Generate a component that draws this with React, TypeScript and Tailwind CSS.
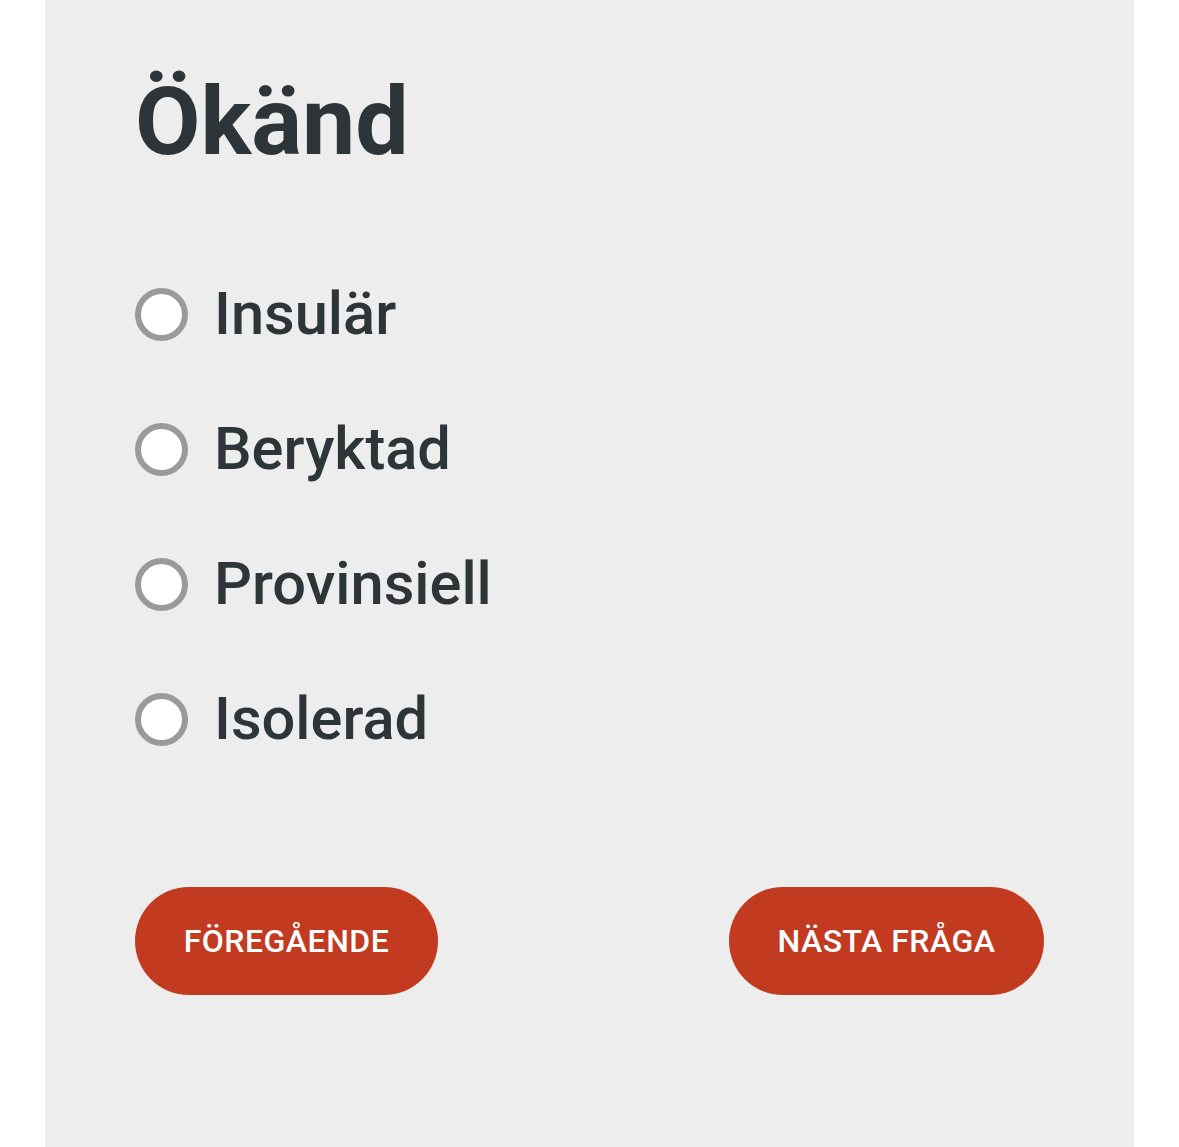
const options = ["Insulär", "Beryktad", "Provinsiell", "Isolerad"];

function App() {
  return (
    <main className="min-h-[1147px] w-[1179px] bg-white font-['Roboto',sans-serif]">
      <section className="ml-[45px] min-h-[1147px] w-[1089px] bg-[#ededed] pl-[90px] pr-[90px] pt-[62px]">
        <h1 className="text-[95px] font-bold leading-[120px] text-[#2d3538]">Ökänd</h1>

        <div className="mt-[101px] flex flex-col gap-[73px]">
          {options.map((opt) => (
            <label key={opt} className="flex h-[62px] items-center gap-[26px]">
              <span className="h-[53px] w-[53px] rounded-full border-[6px] border-[#9a9a9a] bg-white" />
              <span className="text-[59.6px] font-medium leading-[62px] text-[#2d3538]">{opt}</span>
            </label>
          ))}
        </div>

        <div className="mt-[137px] flex justify-between">
          <button className="h-[108px] w-[303px] rounded-full bg-[#c23a1f] text-[32px] font-medium tracking-[0.5px] text-white">
            FÖREGÅENDE
          </button>
          <button className="h-[108px] w-[315px] rounded-full bg-[#c23a1f] text-[32px] font-medium tracking-[0.5px] text-white">
            NÄSTA FRÅGA
          </button>
        </div>
      </section>
    </main>
  );
}

export default App;
